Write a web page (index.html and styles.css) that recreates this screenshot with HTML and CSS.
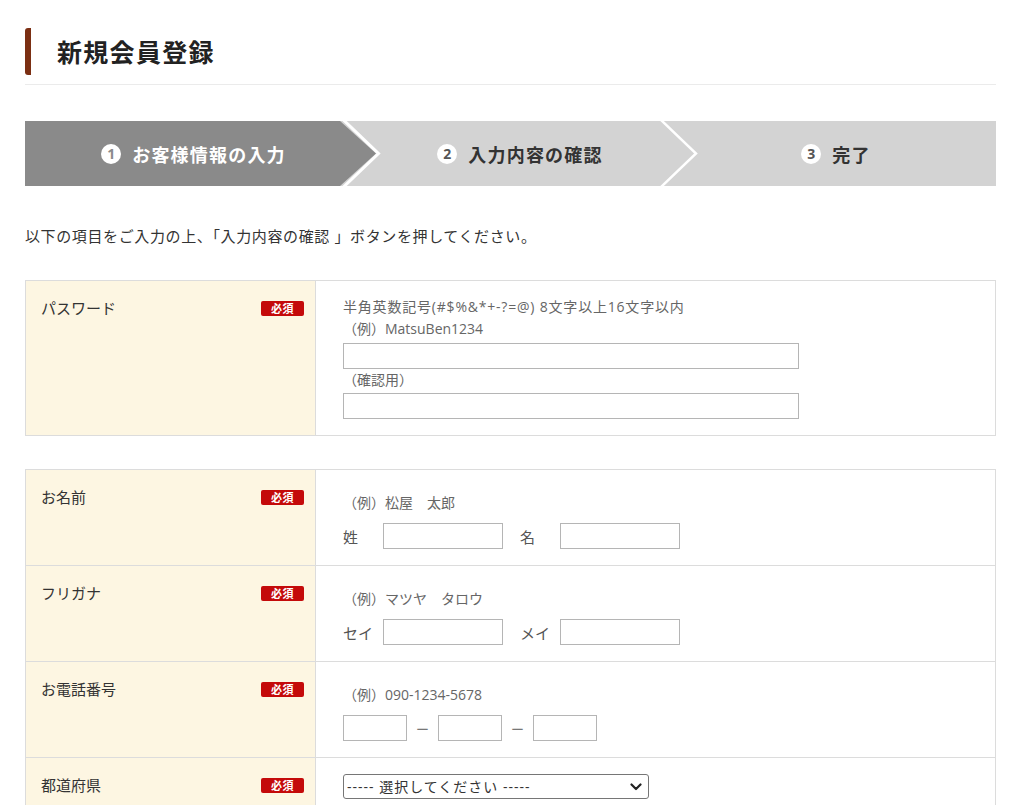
FILE: index.html
```html
<!DOCTYPE html>
<html lang="ja">
<head>
<meta charset="utf-8">
<title>新規会員登録</title>
<link rel="stylesheet" href="styles.css">
</head>
<body>
<div class="page">
  <header class="page-head">
    <h1 class="title">新規会員登録</h1>
  </header>

  <ol class="steps">
    <li class="step step-current">
      <span class="num">1</span><span class="step-label">お客様情報の入力</span>
      <svg class="chev" width="42" height="65" viewBox="0 0 42 65"><polygon points="0,0 36,32.5 0,65" fill="#8a8a8a"/><polyline points="2.5,-2 38.5,32.5 2.5,67" fill="none" stroke="#fff" stroke-width="3"/></svg>
    </li>
    <li class="step step-2">
      <span class="num">2</span><span class="step-label">入力内容の確認</span>
      <svg class="chev" width="42" height="65" viewBox="0 0 42 65"><polyline points="2,-2 38,32.5 2,67" fill="none" stroke="#fff" stroke-width="2.5"/></svg>
    </li>
    <li class="step step-3">
      <span class="num">3</span><span class="step-label">完了</span>
    </li>
  </ol>

  <p class="intro">以下の項目をご入力の上、「入力内容の確認 」ボタンを押してください。</p>

  <div class="form-table">
    <div class="row">
      <div class="label-cell"><span>パスワード</span><span class="req">必須</span></div>
      <div class="field-cell pw">
        <p class="note rule">半角英数記号(#$%&amp;*+-?=@) 8文字以上16文字以内</p>
        <p class="note">（例）MatsuBen1234</p>
        <input class="input wide" type="password">
        <p class="note tight">（確認用）</p>
        <input class="input wide" type="password">
      </div>
    </div>
  </div>

  <div class="form-table second">
    <div class="row">
      <div class="label-cell"><span>お名前</span><span class="req">必須</span></div>
      <div class="field-cell">
        <p class="note">（例）松屋　太郎</p>
        <div class="inline">
          <span class="sub">姓</span><input class="input name" type="text">
          <span class="sub">名</span><input class="input name" type="text">
        </div>
      </div>
    </div>
    <div class="row">
      <div class="label-cell"><span>フリガナ</span><span class="req">必須</span></div>
      <div class="field-cell">
        <p class="note">（例）マツヤ　タロウ</p>
        <div class="inline">
          <span class="sub">セイ</span><input class="input name" type="text">
          <span class="sub">メイ</span><input class="input name" type="text">
        </div>
      </div>
    </div>
    <div class="row">
      <div class="label-cell"><span>お電話番号</span><span class="req">必須</span></div>
      <div class="field-cell">
        <p class="note">（例）090-1234-5678</p>
        <div class="inline">
          <input class="input tel" type="text"><span class="dash">ー</span><input class="input tel" type="text"><span class="dash">ー</span><input class="input tel" type="text">
        </div>
      </div>
    </div>
    <div class="row">
      <div class="label-cell"><span>都道府県</span><span class="req">必須</span></div>
      <div class="field-cell sel-cell">
        <div class="select-wrap">
          <select class="select">
            <option>----- 選択してください -----</option>
          </select>
          <svg class="select-arrow" width="12" height="8" viewBox="0 0 12 8"><polyline points="1.5,1.5 6,6 10.5,1.5" fill="none" stroke="#222" stroke-width="2.2" stroke-linecap="round" stroke-linejoin="round"/></svg>
        </div>
      </div>
    </div>
  </div>
</div>
</body>
</html>
```

FILE: styles.css
```css
* { box-sizing: border-box; }
html, body { margin: 0; padding: 0; background: #fff; }
body {
  font-family: "Open Sans", "Noto Sans CJK JP", sans-serif;
  color: #333;
}
.page {
  width: 971px;
  margin-left: 25px;
  padding-top: 28px;
}
.page-head {
  border-bottom: 1px solid #ebebeb;
  padding-bottom: 9px;
}
.title {
  margin: 0;
  height: 47px;
  line-height: 47px;
  font-family: "Noto Sans CJK JP", sans-serif;
  font-size: 25px;
  font-weight: bold;
  letter-spacing: 1.3px;
  color: #222;
  padding-left: 26px;
  border-left: 6px solid #7b2f13;
  border-radius: 3px 0 0 3px;
}

.steps {
  list-style: none;
  margin: 36px 0 0;
  padding: 0;
  height: 65px;
  display: flex;
  background: #d3d3d3;
}
.step {
  position: relative;
  display: flex;
  align-items: center;
  justify-content: center;
  font-family: "Noto Sans CJK JP", sans-serif;
  font-size: 18px;
  font-weight: bold;
  color: #333;
  letter-spacing: 1.2px;
}
.step-current {
  width: 315px;
  background: #8a8a8a;
  color: #fff;
  padding-left: 22px;
}
.step-2 { width: 318px; padding-left: 42px; }
.step-3 { flex: 1; padding-left: 18px; }
.num {
  width: 20px;
  height: 20px;
  border-radius: 50%;
  background: #fff;
  color: #555;
  font-family: "Open Sans", sans-serif;
  font-size: 14px;
  line-height: 20px;
  text-align: center;
  margin-right: 11px;
  letter-spacing: 0;
}
.step-current .num { color: #8a8a8a; }
.chev {
  position: absolute;
  left: 100%;
  top: 0;
  z-index: 1;
}

.intro {
  margin: 39px 0 0;
  font-size: 15px;
  line-height: 22px;
  letter-spacing: 0.62px;
  color: #333;
}

.form-table {
  margin-top: 33px;
  border: 1px solid #dcdcdc;
}
.form-table.second { margin-top: 33px; }
.row {
  display: grid;
  grid-template-columns: 290px 1fr;
}
.row + .row { border-top: 1px solid #dcdcdc; }
.label-cell {
  background: #fdf6e2;
  border-right: 1px solid #dcdcdc;
  padding: 17px 11px 0 15px;
  display: flex;
  justify-content: space-between;
  align-items: flex-start;
  font-size: 15px;
  line-height: 20px;
  color: #333;
}
.req {
  margin-top: 3px;
  width: 43px;
  height: 15px;
  background: #c40a0a;
  color: #fff;
  border-radius: 2px;
  font-family: "Noto Sans CJK JP", sans-serif;
  font-size: 11px;
  font-weight: bold;
  line-height: 15px;
  text-align: center;
  letter-spacing: 0.5px;
}
.field-cell {
  padding: 22px 20px 16px 27px;
}
.field-cell.pw { padding-top: 15px; padding-bottom: 16px; }
.note {
  margin: 0;
  font-size: 14px;
  line-height: 22px;
  color: #666;
}
.note.rule { letter-spacing: 0.8px; }
.note.tight { line-height: 21px; }
.input {
  display: block;
  height: 26px;
  border: 1px solid #b5b5b5;
  border-radius: 0;
  background: #fff;
  padding: 0 4px;
  font-size: 14px;
  margin: 0;
}
.input.wide { width: 456px; margin: 3px 0 0; }
.inline {
  display: flex;
  align-items: center;
  margin-top: 9px;
}
.sub {
  width: 40px;
  font-size: 15px;
  color: #555;
}
.input.name { width: 120px; margin-right: 17px; }
.input.tel { width: 64px; }
.dash {
  width: 31px;
  text-align: center;
  font-size: 13px;
  color: #777;
}
.sel-cell { padding-top: 16px; }
.select-wrap {
  position: relative;
  width: 306px;
}
.select {
  -webkit-appearance: none;
  appearance: none;
  display: block;
  width: 306px;
  height: 25px;
  border: 1px solid #767676;
  border-radius: 3px;
  background: #fff;
  font-family: "Open Sans", "Noto Sans CJK JP", sans-serif;
  font-size: 14px;
  letter-spacing: 1px;
  color: #333;
  padding: 0 3px;
}
.select-arrow {
  position: absolute;
  right: 7px;
  top: 9px;
  pointer-events: none;
}
```
